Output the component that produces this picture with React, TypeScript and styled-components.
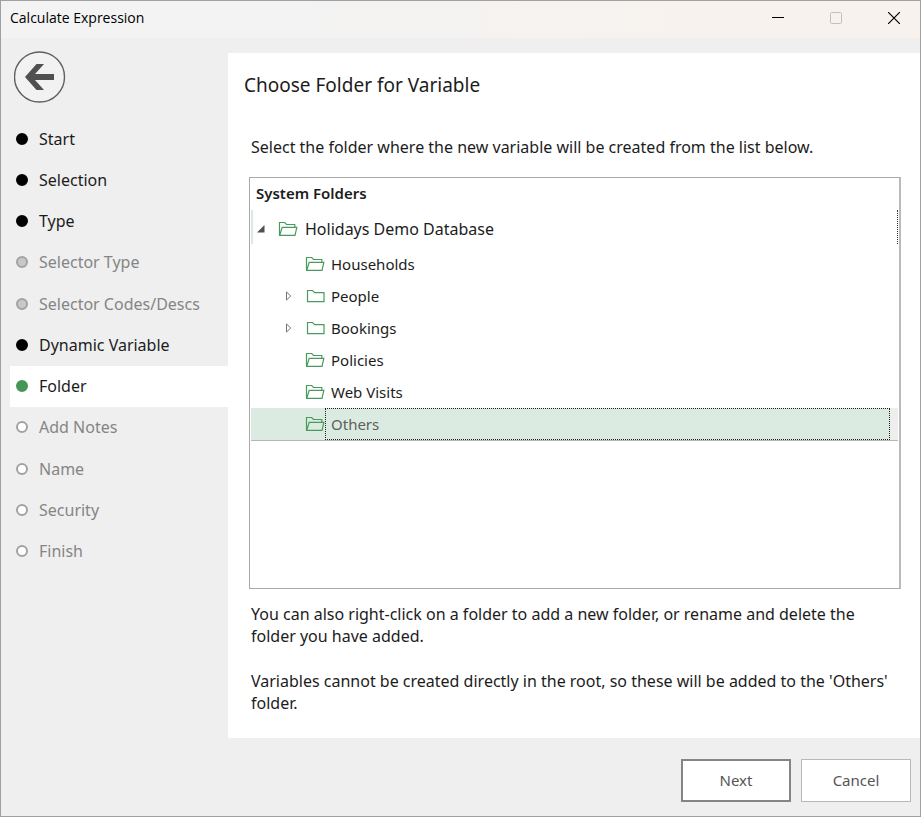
import React, { useState } from "react";
import styled, { createGlobalStyle } from "styled-components";

const GlobalStyle = createGlobalStyle`
  *, *::before, *::after { box-sizing: border-box; }
  body {
    margin: 0;
    background: #efefef;
    color: #1c1c1c;
    font: 16px/22px "Noto Sans", "Open Sans", sans-serif;
  }
  button { font: inherit; color: inherit; }
`;

const Window = styled.div`
  display: flex;
  flex-direction: column;
  min-height: 100vh;
  border: 1px solid #a0a0a0;
  background: #efefef;
`;

const TitleBar = styled.header`
  display: flex;
  align-items: center;
  justify-content: space-between;
  height: 37px;
  padding: 0 3px 3px 9px;
  background: linear-gradient(90deg, #f3f3f3 30%, #f7f2ee 75%);
`;

const WindowTitle = styled.span`
  font-family: "Open Sans", "Noto Sans", sans-serif;
  font-size: 14px;
  line-height: 20px;
  color: #000;
`;

const WindowControls = styled.div`
  display: flex;
  gap: 12px;
`;

const WindowButton = styled.button`
  display: grid;
  place-items: center;
  width: 46px;
  height: 34px;
  padding: 0;
  border: 0;
  background: none;
  color: #000;

  &:disabled { color: #c4c0bd; }
`;

const Body = styled.div`
  display: flex;
  flex: 1;
`;

const Sidebar = styled.nav`
  flex: none;
  width: 227px;
  padding: 13px 0 0 9px;
`;

const BackButton = styled.button`
  display: block;
  margin: 0 0 15px 4px;
  padding: 0;
  border: 0;
  background: none;

  svg { display: block; }
`;

const Steps = styled.ol`
  display: flex;
  flex-direction: column;
  height: 454px;
  margin: 0;
  padding: 0;
  list-style: none;
`;

type StepState = "done" | "skipped" | "active" | "pending";

const Step = styled.li<{ $state: StepState }>`
  display: flex;
  flex: 1;
  align-items: center;
  gap: 11px;
  padding-left: 6px;
  background: ${(p) => (p.$state === "active" ? "#fff" : "none")};
  color: ${(p) =>
    p.$state === "done" || p.$state === "active" ? "#1c1c1c" : "#858585"};
`;

const dotFill = {
  done: "#000",
  skipped: "#c8c8c8",
  active: "#469657",
  pending: "#fff",
};

const Dot = styled.span<{ $state: StepState }>`
  width: 12px;
  height: 12px;
  border-radius: 50%;
  background: ${(p) => dotFill[p.$state]};
  border: 2px solid
    ${(p) =>
      p.$state === "skipped" || p.$state === "pending"
        ? "#a2a2a2"
        : dotFill[p.$state]};
`;

const Content = styled.main`
  flex: 1;
  min-width: 0;
  margin-top: 15px;
  padding: 20px 19px 0 21px;
  background: #fff;
`;

const Heading = styled.h1`
  margin: 0 0 39px -5px;
  font-size: 19px;
  line-height: 24px;
  font-weight: 400;
`;

const Text = styled.p`
  margin: 0 0 23px;
  padding: 0 2px;
`;

const Intro = styled(Text)`
  margin-bottom: 19px;
`;

const TreeBox = styled.section`
  height: 412px;
  margin-bottom: 14px;
  padding: 4px 1px 0;
  overflow: auto;
  border: 1px solid #a9a9ad;
  border-right: 2px solid #b9b9be;
`;

const TreeHeading = styled.h2`
  margin: 0 0 6px;
  padding-left: 5px;
  font-size: 15px;
  line-height: 22px;
  font-weight: 600;
`;

const TreeList = styled.ul`
  margin: 0;
  padding: 0;
  list-style: none;
`;

const RootRow = styled.div`
  display: flex;
  align-items: center;
  height: 34px;
  margin-bottom: 4px;
  padding: 4px 0 0 1px;
  border-left: 2px solid #dcebe1;
  border-right: 1px dotted #333;
`;

const Row = styled.div<{ $selected: boolean }>`
  display: flex;
  align-items: stretch;
  height: 32px;
  padding-left: 30px;
  font-size: 15px;
  cursor: default;
  ${(p) =>
    p.$selected
      ? `height: 33px;
         padding-right: 8px;
         background: linear-gradient(90deg, #dcebe1 calc(100% - 8px), #eee 0);
         border-bottom: 1px solid #b4b8b6;
         color: #5a605c;`
      : ""}
`;

const Toggle = styled.button`
  display: grid;
  place-items: center;
  align-self: center;
  width: 14px;
  height: 20px;
  padding: 0;
  border: 0;
  background: none;
`;

const ToggleSpace = styled.span`
  width: 14px;
`;

const FolderSlot = styled.span`
  display: grid;
  place-items: center;
  align-self: center;
  width: 20px;
  margin-left: 10px;
`;

const Label = styled.span<{ $selected?: boolean }>`
  display: flex;
  align-items: center;
  flex: 1;
  padding-left: 5px;
  border: 1px dotted ${(p) => (p.$selected ? "#222" : "transparent")};
`;

const RootLabel = styled(Label)`
  padding-left: 6px;
`;

const Footer = styled.footer`
  display: flex;
  justify-content: flex-end;
  gap: 10px;
  padding: 21px 9px 14px;
`;

const DialogButton = styled.button<{ $primary?: boolean }>`
  width: 110px;
  height: 43px;
  padding: 0 0 2px;
  border: ${(p) => (p.$primary ? "2px solid #858585" : "1px solid #b8b8b8")};
  background: #fff;
  color: #555;
  font-size: 15px;
`;

function OpenFolder() {
  return (
    <svg width="20" height="16" viewBox="0 0 20 16" fill="none" stroke="#4a9a5e" strokeWidth="1.2" aria-hidden="true">
      <path d="M1.5 14.3V1.5h5.2l1.8 2h8.3v2.7" />
      <path d="M1.7 14.3 4.2 6.4h14.6l-1.8 7.9z" />
    </svg>
  );
}

function ClosedFolder() {
  return (
    <svg width="20" height="16" viewBox="0 0 20 16" fill="none" stroke="#4a9a5e" strokeWidth="1.2" aria-hidden="true">
      <path d="M2.5 2.5h5l2.2 2.2h9.3v9h-16.5z" />
    </svg>
  );
}

const steps: { name: string; state: StepState }[] = [
  { name: "Start", state: "done" },
  { name: "Selection", state: "done" },
  { name: "Type", state: "done" },
  { name: "Selector Type", state: "skipped" },
  { name: "Selector Codes/Descs", state: "skipped" },
  { name: "Dynamic Variable", state: "done" },
  { name: "Folder", state: "active" },
  { name: "Add Notes", state: "pending" },
  { name: "Name", state: "pending" },
  { name: "Security", state: "pending" },
  { name: "Finish", state: "pending" },
];

const folders = [
  { name: "Households", expandable: false },
  { name: "People", expandable: true },
  { name: "Bookings", expandable: true },
  { name: "Policies", expandable: false },
  { name: "Web Visits", expandable: false },
  { name: "Others", expandable: false },
];

export default function App() {
  const [selected, setSelected] = useState("Others");

  return (
    <Window>
      <GlobalStyle />
      <TitleBar>
        <WindowTitle>Calculate Expression</WindowTitle>
        <WindowControls>
          <WindowButton aria-label="Minimize">
            <svg width="12" height="12" stroke="currentColor" aria-hidden="true">
              <path d="M0 5.5h12" />
            </svg>
          </WindowButton>
          <WindowButton aria-label="Maximize" disabled>
            <svg width="12" height="12" fill="none" stroke="currentColor" aria-hidden="true">
              <rect x="0.5" y="0.5" width="11" height="11" rx="1" />
            </svg>
          </WindowButton>
          <WindowButton aria-label="Close">
            <svg width="12" height="12" stroke="currentColor" strokeWidth="1.2" aria-hidden="true">
              <path d="M0 0l12 12M12 0L0 12" />
            </svg>
          </WindowButton>
        </WindowControls>
      </TitleBar>

      <Body>
        <Sidebar aria-label="Wizard steps">
          <BackButton aria-label="Back">
            <svg width="52" height="52" viewBox="0 0 52 52" aria-hidden="true">
              <circle cx="25.5" cy="26" r="25" fill="#f2f2f2" stroke="#606060" strokeWidth="1.4" />
              <path d="M11 26 22.5 13H30L21 22.9H40V29.1H21L30 39H22.5z" fill="#505050" />
            </svg>
          </BackButton>
          <Steps>
            {steps.map((s) => (
              <Step key={s.name} $state={s.state} aria-current={s.state === "active" ? "step" : undefined}>
                <Dot $state={s.state} />
                {s.name}
              </Step>
            ))}
          </Steps>
        </Sidebar>

        <Content>
          <Heading>Choose Folder for Variable</Heading>
          <Intro>Select the folder where the new variable will be created from the list below.</Intro>
          <TreeBox>
            <TreeHeading>System Folders</TreeHeading>
            <TreeList role="tree" aria-label="System Folders">
              <li role="treeitem" aria-expanded="true">
                <RootRow>
                  <Toggle aria-label="Collapse Holidays Demo Database">
                    <svg width="8" height="8" aria-hidden="true">
                      <path d="M7.5 0v7.5H0z" fill="#505050" />
                    </svg>
                  </Toggle>
                  <FolderSlot><OpenFolder /></FolderSlot>
                  <RootLabel>Holidays Demo Database</RootLabel>
                </RootRow>
                <TreeList role="group">
                  {folders.map((f) => (
                    <li key={f.name} role="treeitem" aria-selected={selected === f.name}>
                      <Row $selected={selected === f.name} onClick={() => setSelected(f.name)}>
                        {f.expandable ? (
                          <Toggle aria-label={`Expand ${f.name}`}>
                            <svg width="7" height="10" fill="none" stroke="#777" aria-hidden="true">
                              <path d="M1.5 1v8L5.8 5z" />
                            </svg>
                          </Toggle>
                        ) : (
                          <ToggleSpace />
                        )}
                        <FolderSlot>{f.expandable ? <ClosedFolder /> : <OpenFolder />}</FolderSlot>
                        <Label $selected={selected === f.name}>{f.name}</Label>
                      </Row>
                    </li>
                  ))}
                </TreeList>
              </li>
            </TreeList>
          </TreeBox>
          <Text>
            You can also right-click on a folder to add a new folder, or rename and delete the folder you have added.
          </Text>
          <Text>
            Variables cannot be created directly in the root, so these will be added to the 'Others' folder.
          </Text>
        </Content>
      </Body>

      <Footer>
        <DialogButton $primary>Next</DialogButton>
        <DialogButton>Cancel</DialogButton>
      </Footer>
    </Window>
  );
}
